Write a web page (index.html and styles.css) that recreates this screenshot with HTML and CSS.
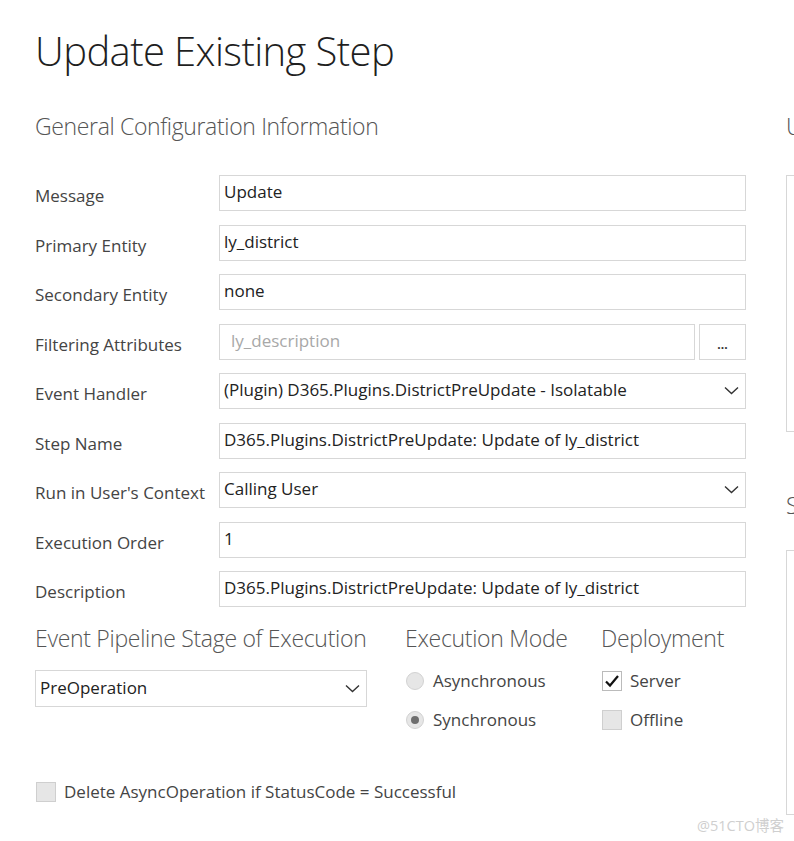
FILE: index.html
```html
<!DOCTYPE html>
<html>
<head>
<meta charset="utf-8">
<link rel="stylesheet" href="styles.css">
</head>
<body>
<div class="page">
  <div class="main">
    <h1 class="title">Update Existing Step</h1>
    <h2 class="section">General Configuration Information</h2>
    <div class="form">
      <div class="label">Message</div>
      <div class="field"><span class="val">Update</span></div>

      <div class="label">Primary Entity</div>
      <div class="field"><span class="val">ly_district</span></div>

      <div class="label">Secondary Entity</div>
      <div class="field"><span class="val">none</span></div>

      <div class="label">Filtering Attributes</div>
      <div class="split">
        <div class="field grow"><span class="val ph">ly_description</span></div>
        <div class="field btn">...</div>
      </div>

      <div class="label">Event Handler</div>
      <div class="field sel"><span class="val">(Plugin) D365.Plugins.DistrictPreUpdate - Isolatable</span>
        <svg class="chev" width="15" height="9" viewBox="0 0 15 9"><polyline points="1,1.5 7.5,7.5 14,1.5" fill="none" stroke="#333" stroke-width="1.4"/></svg>
      </div>

      <div class="label">Step Name</div>
      <div class="field"><span class="val">D365.Plugins.DistrictPreUpdate: Update of ly_district</span></div>

      <div class="label">Run in User's Context</div>
      <div class="field sel"><span class="val">Calling User</span>
        <svg class="chev" width="15" height="9" viewBox="0 0 15 9"><polyline points="1,1.5 7.5,7.5 14,1.5" fill="none" stroke="#333" stroke-width="1.4"/></svg>
      </div>

      <div class="label">Execution Order</div>
      <div class="field"><span class="val">1</span></div>

      <div class="label">Description</div>
      <div class="field"><span class="val">D365.Plugins.DistrictPreUpdate: Update of ly_district</span></div>
    </div>

    <div class="options">
      <div class="col col-stage">
        <h2 class="section small">Event Pipeline Stage of Execution</h2>
        <div class="field sel stage"><span class="val">PreOperation</span>
          <svg class="chev" width="15" height="9" viewBox="0 0 15 9"><polyline points="1,1.5 7.5,7.5 14,1.5" fill="none" stroke="#333" stroke-width="1.4"/></svg>
        </div>
      </div>
      <div class="col col-mode">
        <h2 class="section small">Execution Mode</h2>
        <div class="opt"><span class="radio"></span><span class="opt-text">Asynchronous</span></div>
        <div class="opt"><span class="radio on"></span><span class="opt-text">Synchronous</span></div>
      </div>
      <div class="col col-dep">
        <h2 class="section small">Deployment</h2>
        <div class="opt"><span class="check on"><svg width="16" height="14" viewBox="0 0 16 14"><polyline points="2,7.5 6,11.5 14,2" fill="none" stroke="#111" stroke-width="2.2"/></svg></span><span class="opt-text">Server</span></div>
        <div class="opt"><span class="check"></span><span class="opt-text">Offline</span></div>
      </div>
    </div>

    <div class="opt delete"><span class="check"></span><span class="opt-text">Delete AsyncOperation if StatusCode = Successful</span></div>
  </div>

  <div class="side">
    <h2 class="section side-h">Unsecure Configuration</h2>
    <div class="box box1"></div>
    <h2 class="section side-h second">Secure Configuration</h2>
    <div class="box box2"></div>
  </div>
</div>
<div class="watermark">@51CTO博客</div>
</body>
</html>
```
FILE: styles.css
```css
html, body {
  margin: 0;
  padding: 0;
  background: #ffffff;
  overflow: hidden;
}
body {
  font-family: "Open Sans", "Noto Sans", sans-serif;
  width: 794px;
  height: 841px;
  position: relative;
}
.page {
  display: flex;
  padding-left: 35px;
  gap: 40px;
}
.main {
  width: 711px;
  flex: none;
}
.title {
  margin: 27px 0 0 0;
  font-size: 40px;
  line-height: 48px;
  font-weight: 300;
  color: #1f1f1f;
  letter-spacing: -0.6px;
  white-space: nowrap;
}
.section {
  margin: 35px 0 0 0;
  font-size: 23px;
  line-height: 32px;
  font-weight: 300;
  color: #555;
  white-space: nowrap;
  letter-spacing: -0.35px;
}
.form {
  margin-top: 33px;
  display: grid;
  grid-template-columns: 184px 527px;
  row-gap: 13.5px;
  align-items: center;
}
.label {
  font-size: 17px;
  color: #444;
  padding-top: 5px;
  white-space: nowrap;
}
.field {
  height: 36px;
  box-sizing: border-box;
  border: 1px solid #d7d7d7;
  background: #fff;
  display: flex;
  align-items: center;
  padding: 0 0 3px 4px;
  font-size: 17px;
  color: #222;
  white-space: nowrap;
  overflow: hidden;
}
.val.ph {
  color: #a8a8a8;
  padding-left: 7px;
}
.split {
  display: flex;
  gap: 4px;
}
.grow {
  flex: 1;
}
.btn {
  width: 47px;
  flex: none;
  justify-content: center;
  padding: 6px 0 0 0;
  font-size: 12px;
  font-weight: 700;
  color: #333;
}
.sel {
  justify-content: space-between;
  padding-right: 6px;
}
.chev {
  flex: none;
  margin-top: 2px;
}
.options {
  display: flex;
  gap: 38px;
}
.options .section.small {
  margin-top: 15px;
  color: #555;
  letter-spacing: -0.3px;
}
.col-stage {
  width: 332px;
}
.col-mode {
  width: 158px;
}
.col-dep {
  flex: 1;
}
.stage {
  margin-top: 16px;
  height: 37px;
}
.opt {
  display: flex;
  align-items: center;
  height: 22px;
  font-size: 17px;
  color: #444;
  white-space: nowrap;
}
.col .opt:first-of-type {
  margin-top: 16px;
}
.col .opt + .opt {
  margin-top: 17px;
}
.radio {
  width: 18px;
  height: 18px;
  box-sizing: border-box;
  border-radius: 50%;
  border: 1px solid #d2d2d2;
  background: #e6e6e6;
  margin-left: 1px;
  margin-right: 9px;
  display: flex;
  align-items: center;
  justify-content: center;
  flex: none;
}
.radio.on::after {
  content: "";
  width: 8px;
  height: 8px;
  border-radius: 50%;
  background: #6e6e6e;
}
.check {
  width: 20px;
  height: 20px;
  box-sizing: border-box;
  border: 1px solid #cfcfcf;
  background: #e6e6e6;
  margin-left: 1px;
  margin-right: 8px;
  display: flex;
  align-items: center;
  justify-content: center;
  flex: none;
}
.check.on {
  background: #fff;
  border-color: #bbb;
}
.opt-text {
  padding-bottom: 1px;
}
.delete {
  margin-top: 50px;
}
.side {
  flex: 1;
  min-width: 0;
  overflow: hidden;
}
.side-h {
  margin-top: 110px;
}
.box {
  box-sizing: border-box;
  border: 1px solid #d7d7d7;
  width: 300px;
}
.box1 {
  margin-top: 33px;
  height: 257px;
}
.side-h.second {
  margin-top: 57px;
}
.box2 {
  margin-top: 29px;
  height: 265px;
}
.watermark {
  position: absolute;
  left: 697px;
  top: 814px;
  font-family: "Open Sans", "Noto Sans CJK SC", sans-serif;
  font-size: 14.5px;
  color: #cfcfcf;
  white-space: nowrap;
}
```
